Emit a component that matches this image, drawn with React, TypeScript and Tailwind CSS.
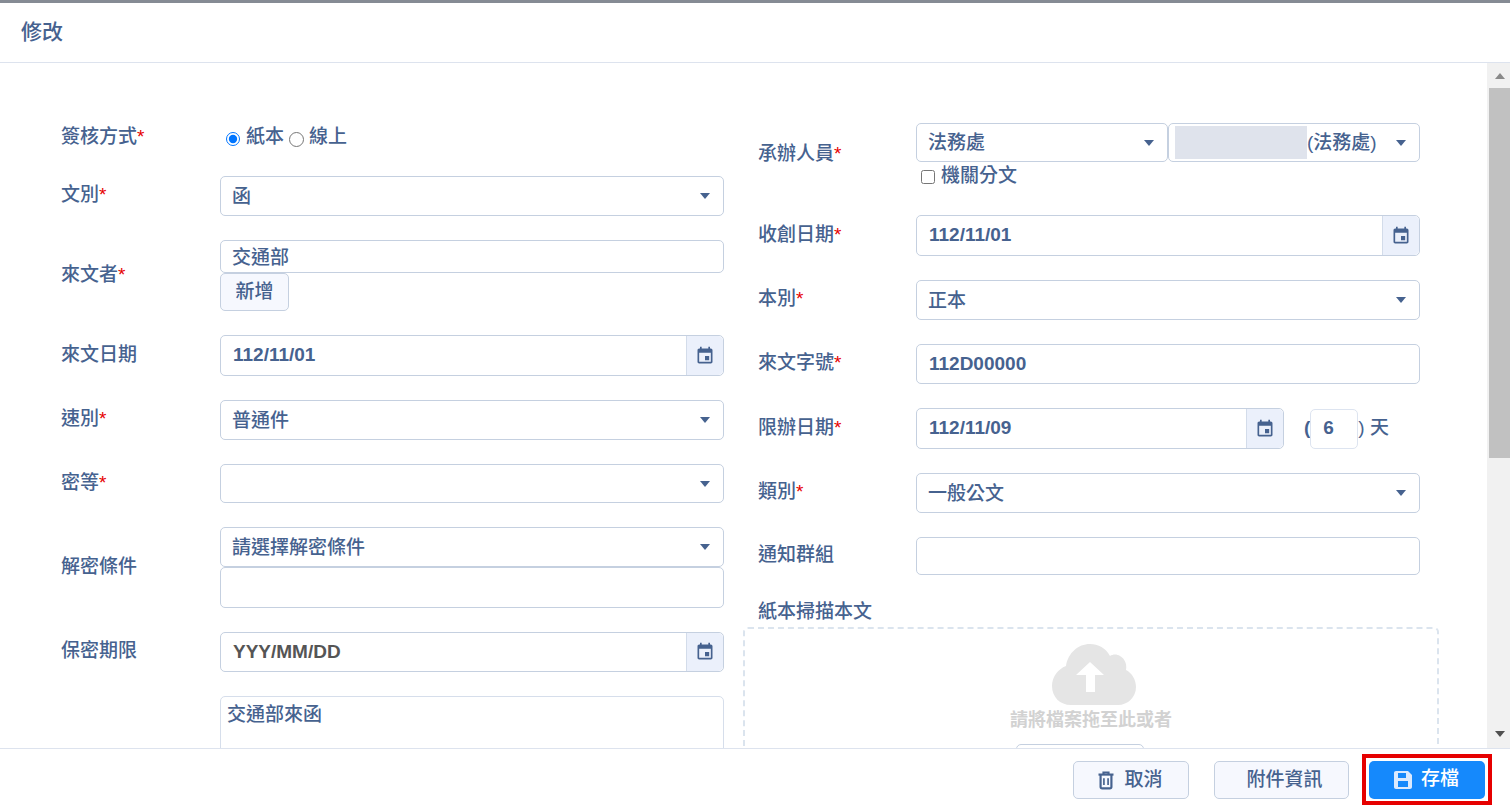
import type { ReactNode } from "react";

const FONT = "font-['Liberation_Sans','Noto_Sans_CJK_TC',sans-serif]";

function Field({ label, required, children, className = "" }: { label: string; required?: boolean; children: ReactNode; className?: string }) {
  return (
    <div className={`flex items-center ${className}`}>
      <div className="w-[159px] shrink-0 pb-[2px] text-[19px] leading-[24px] font-medium">
        {label}
        {required && <span className="text-[#e60000]">*</span>}
      </div>
      <div className="min-w-0 flex-1">{children}</div>
    </div>
  );
}

function Caret() {
  return <span className="mr-[13px] ml-auto h-0 w-0 shrink-0 border-x-[5px] border-t-[6px] border-x-transparent border-t-[#46628f]" />;
}

function Select({ value, className = "h-[40px]" }: { value?: string; className?: string }) {
  return (
    <div className={`flex items-center rounded-[5px] border border-[#c5d0e0] bg-white pl-[11px] text-[19px] font-medium ${className}`}>
      <span className="pt-[2px]">{value}</span>
      <Caret />
    </div>
  );
}

function Input({ value, className = "h-[40px]" }: { value?: string; className?: string }) {
  return (
    <div className={`flex items-center rounded-[5px] border border-[#c5d0e0] bg-white pl-[12px] text-[19px] font-bold ${className}`}>
      {value}
    </div>
  );
}

function DateInput({ value, muted, className = "h-[41px]" }: { value: string; muted?: boolean; className?: string }) {
  return (
    <div className={`flex items-stretch rounded-[5px] border border-[#c5d0e0] bg-white text-[19px] font-bold ${className}`}>
      <div className={`flex flex-1 items-center pl-[12px] ${muted ? "text-[#555555]" : ""}`}>{value}</div>
      <div className="flex w-[37px] items-center justify-center rounded-r-[5px] border-l border-[#d3dcea] bg-[#ebf0fb]">
        <svg className="size-[20px]" viewBox="0 0 24 24" fill="#46628f">
          <path d="M17 12h-5v5h5v-5zM16 1v2H8V1H6v2H5c-1.11 0-1.99.9-1.99 2L3 19c0 1.1.89 2 2 2h14c1.1 0 2-.9 2-2V5c0-1.1-.9-2-2-2h-1V1h-2zm3 18H5V8h14v11z" />
        </svg>
      </div>
    </div>
  );
}

function FooterButton({ children, className = "" }: { children: ReactNode; className?: string }) {
  return (
    <button
      type="button"
      className={`flex h-[38px] items-center justify-center rounded-[5px] border border-[#c5d0e0] bg-[#f6f8fe] text-[19px] font-medium text-[#46628f] ${className}`}
    >
      {children}
    </button>
  );
}

export default function App() {
  return (
    <div className={`flex h-[809px] w-[1510px] flex-col overflow-hidden bg-white text-[#46628f] ${FONT}`}>
      <div className="h-[3px] shrink-0 bg-[#858b94]" />
      <header className="flex h-[60px] shrink-0 items-center border-b border-[#dde3ee] pb-[2px] pl-[21px] text-[21px] font-medium">
        修改
      </header>

      <div className="flex min-h-0 flex-1">
        <main className="min-w-0 flex-1 overflow-hidden">
          <div className="flex gap-[34px] pt-[60px] pl-[61px]">
            <div className="flex w-[663px] flex-col gap-[24px]">
              <Field label="簽核方式" required className="h-[29px]">
                <div className="flex items-center pl-[6px] text-[19px] font-medium">
                  <input type="radio" name="sign" defaultChecked className="m-0 mt-[3px] size-[14px]" />
                  <span className="ml-[6px]">紙本</span>
                  <input type="radio" name="sign" className="m-0 mt-[3px] ml-[5px] size-[15px]" />
                  <span className="ml-[5px]">線上</span>
                </div>
              </Field>
              <Field label="文別" required>
                <Select value="函" />
              </Field>
              <Field label="來文者" required>
                <div className="flex h-[33px] items-center rounded-[5px] border border-[#c5d0e0] bg-white pt-[3px] pl-[11px] text-[19px] font-medium">
                  交通部
                </div>
                <button
                  type="button"
                  className="flex h-[38px] w-[69px] items-center justify-center rounded-[5px] border border-[#c5d0e0] bg-[#f6f8fe] text-[19px] font-medium"
                >
                  新增
                </button>
              </Field>
              <Field label="來文日期">
                <DateInput value="112/11/01" />
              </Field>
              <Field label="速別" required>
                <Select value="普通件" />
              </Field>
              <Field label="密等" required>
                <Select className="h-[39px]" />
              </Field>
              <Field label="解密條件">
                <Select value="請選擇解密條件" />
                <Input className="h-[41px]" />
              </Field>
              <Field label="保密期限">
                <DateInput value="YYY/MM/DD" muted className="h-[40px]" />
              </Field>
              <div className="ml-[159px] h-[120px] rounded-[5px] border border-[#d6deeb] px-[6px] py-[5px] text-[19px] leading-[26px] font-medium">
                交通部來函
              </div>
            </div>

            <div className="flex w-[662px] flex-col gap-[24px]">
              <div className="flex h-[68px] items-start">
                <div className="mt-[19px] w-[158px] shrink-0 text-[19px] leading-[24px] font-medium">
                  承辦人員<span className="text-[#e60000]">*</span>
                </div>
                <div className="min-w-0 flex-1">
                  <div className="flex">
                    <Select value="法務處" className="h-[39px] w-[252px] shrink-0" />
                    <div className="flex h-[39px] w-[252px] shrink-0 items-center rounded-[5px] border border-[#c5d0e0] pl-[6px] text-[19px] font-medium">
                      <span className="h-[33px] w-[132px] shrink-0 bg-[#dfe3ec]" />
                      <span className="pt-[2px]">(法務處)</span>
                      <Caret />
                    </div>
                  </div>
                  <label className="mt-[2px] flex h-[24px] items-center pl-[5px] text-[19px] font-medium">
                    <input type="checkbox" className="m-0 mt-[2px] size-[14px]" />
                    <span className="ml-[6px]">機關分文</span>
                  </label>
                </div>
              </div>
              <Field label="收創日期" required className="[&>div:first-child]:w-[158px]">
                <DateInput value="112/11/01" />
              </Field>
              <Field label="本別" required className="[&>div:first-child]:w-[158px]">
                <Select value="正本" />
              </Field>
              <Field label="來文字號" required className="[&>div:first-child]:w-[158px]">
                <Input value="112D00000" />
              </Field>
              <div className="flex items-center">
                <div className="w-[158px] shrink-0 pb-[2px] text-[19px] leading-[24px] font-medium">
                  限辦日期<span className="text-[#e60000]">*</span>
                </div>
                <DateInput value="112/11/09" className="h-[41px] w-[368px]" />
                <span className="ml-[20px] text-[19px] font-bold">(</span>
                <span className="flex h-[40px] w-[48px] items-center rounded-[5px] border border-[#dde4f0] pl-[12px] text-[19px] font-bold">
                  6
                </span>
                <span className="text-[19px] font-medium">) 天</span>
              </div>
              <Field label="類別" required className="[&>div:first-child]:w-[158px]">
                <Select value="一般公文" />
              </Field>
              <Field label="通知群組" className="[&>div:first-child]:w-[158px]">
                <Input className="h-[38px]" />
              </Field>
              <div className="mt-[1px]">
                <div className="text-[19px] leading-[24px] font-medium">紙本掃描本文</div>
                <div className="mt-[3px] -ml-[15px] flex h-[200px] w-[696px] flex-col items-center rounded-[5px] border-2 border-dashed border-[#dbe4ee] pt-[15px]">
                  <svg className="ml-[5px] h-[62px] w-[84px]" viewBox="0 0 84 62">
                    <path
                      d="M19 61C8 61 0 53 0 42c0-9 6-17 14-20C16 9 26 0 38 0c8 0 16 4 20 12 3-2 7-2 10 0 5 3 7 8 6 14 6 3 10 10 10 17 0 10-8 18-18 18z"
                      fill="#e5e5e5"
                    />
                    <path d="M38 18 52 31H43V48H34V31H24z" fill="#ffffff" />
                  </svg>
                  <div className="mt-[2px] text-[18px] leading-[24px] font-bold text-[#d2d2d2]">請將檔案拖至此或者</div>
                  <div className="mt-[12px] mr-[22px] h-[38px] w-[128px] rounded-[5px] border border-[#c5d0e0]" />
                </div>
              </div>
            </div>
          </div>
        </main>

        <aside className="flex w-[23px] shrink-0 flex-col bg-[#f1f1f1] pl-[2px]">
          <div className="flex h-[25px] shrink-0 items-center justify-center">
            <span className="h-0 w-0 border-x-[5px] border-b-[6px] border-x-transparent border-b-[#8a8a8a]" />
          </div>
          <div className="h-[370px] w-full shrink-0 bg-[#c1c1c1]" />
          <div className="mt-auto mb-[6px] flex h-[17px] shrink-0 items-center justify-center">
            <span className="h-0 w-0 border-x-[5px] border-t-[6px] border-x-transparent border-t-[#505050]" />
          </div>
        </aside>
      </div>

      <footer className="flex h-[61px] shrink-0 items-center justify-end border-t border-[#dde3ee] pt-[2px] pr-[18px]">
        <FooterButton className="mr-[25px] w-[116px] gap-[8px] pr-[3px]">
          <svg className="size-[20px]" viewBox="0 0 24 24" fill="none" stroke="#46628f" strokeWidth="2.6">
            <path d="M3 5.500h18" />
            <path d="M9 5V3h6v2" />
            <path d="M5.500 6v14a2 2 0 0 0 2 2h9a2 2 0 0 0 2-2V6" />
            <path d="M9.500 10v8M14.500 10v8" strokeWidth="2" />
          </svg>
          取消
        </FooterButton>
        <FooterButton className="mr-[13px] w-[135px] pl-[6px]">附件資訊</FooterButton>
        <div className="-mt-[1px] flex h-[51px] w-[130px] items-center justify-center border-4 border-[#e60000]">
          <button
            type="button"
            className="flex h-[38px] w-[116px] shrink-0 items-center justify-center gap-[6px] rounded-[5px] bg-[#1589fc] pr-[4px] text-[19px] font-medium text-white"
          >
            <svg className="size-[24px]" viewBox="0 0 24 24">
              <path d="M17 3H5c-1.110 0-2 .9-2 2v14c0 1.100.89 2 2 2h14c1.100 0 2-.9 2-2V7l-4-4zM7 5h8v5H7V5zm10 14H7v-6h10v6z" fill="#dbeafe" />
            </svg>
            存檔
          </button>
        </div>
      </footer>
    </div>
  );
}
